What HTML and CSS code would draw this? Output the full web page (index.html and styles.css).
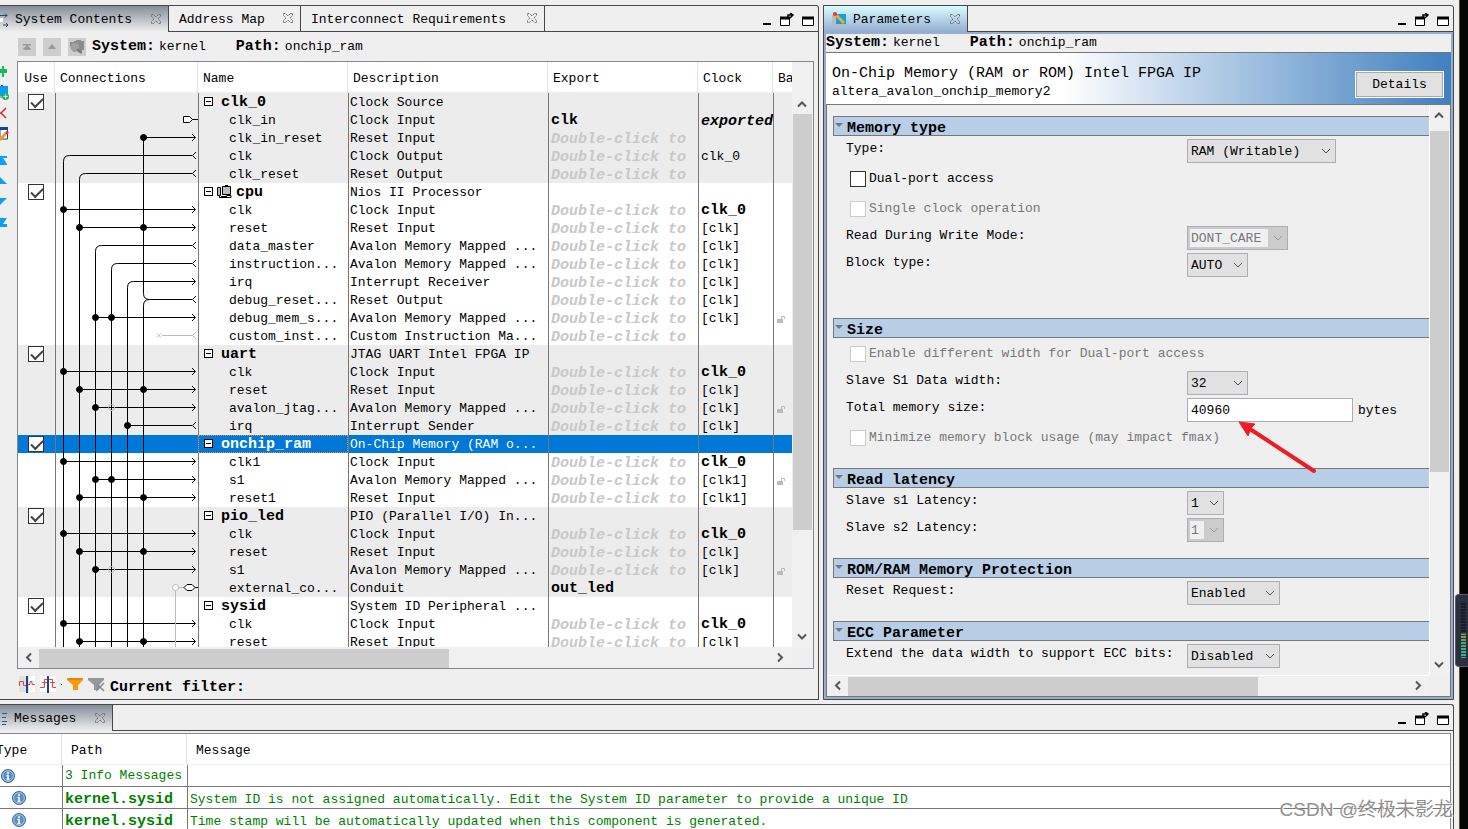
FILE: index.html
```html
<!DOCTYPE html>
<html lang="en">
<head>
<meta charset="utf-8">
<title>System Contents</title>
<link rel="stylesheet" href="styles.css">
</head>
<body>
<svg class="defs" aria-hidden="true">
  <defs>
    <symbol id="close" viewBox="0 0 12 12"><path d="M1.500 1.500h2l2.500 2.500 2.500-2.500h2v2L8 6l2.500 2.500v2h-2L6 8l-2.500 2.500h-2v-2L4 6 1.500 3.500z" fill="none" stroke="#6a6a6a" stroke-dasharray="1.500 0.700"/></symbol>
    <symbol id="win-min" viewBox="0 0 10 14"><path d="M1 11h8" stroke="#000" stroke-width="2"/></symbol>
    <symbol id="win-float" viewBox="0 0 15 14"><path d="M1.500 4.500h9v8h-9z" fill="#fff" stroke="#000"/><path d="M1 5h10" stroke="#000" stroke-width="3"/><path d="M9 4V2h4M11 0l3 2-3 3" fill="none" stroke="#000" stroke-width="1.500"/></symbol>
    <symbol id="win-max" viewBox="0 0 13 14"><path d="M1.500 4.500h11v8h-11z" fill="#fff" stroke="#000"/><path d="M1 5h12" stroke="#000" stroke-width="3"/></symbol>
    <symbol id="up" viewBox="0 0 20 20"><path d="M6 12.500l4-4 4 4" fill="none" stroke="#555" stroke-width="2"/></symbol>
    <symbol id="down" viewBox="0 0 20 20"><path d="M6 7.500l4 4 4-4" fill="none" stroke="#555" stroke-width="2"/></symbol>
    <symbol id="left" viewBox="0 0 20 20"><path d="M12 5.500l-4 4 4 4" fill="none" stroke="#555" stroke-width="2"/></symbol>
    <symbol id="right" viewBox="0 0 20 20"><path d="M7 5.500l4 4-4 4" fill="none" stroke="#555" stroke-width="2"/></symbol>
    <symbol id="lock" viewBox="0 0 9 9"><path d="M0 4h6v4H0z" fill="#bbb"/><path d="M4.500 4V1.500h3V4" fill="none" stroke="#bbb"/></symbol>
    <symbol id="info" viewBox="0 0 14 14"><circle cx="7" cy="7" r="6.500" fill="#5b8fc7" stroke="#3e6a9c"/><circle cx="7" cy="7" r="5.300" fill="none" stroke="#a9c6e6"/><path d="M7 3v2M5.500 6.500H7V10M5.500 10.500h3" stroke="#fff" stroke-width="1.500" fill="none"/></symbol>
  </defs>
</svg>

<div class="app">
  <div class="workspace">
    <div class="upper">
      <section class="panel contents">
        <div class="tabs">
          <button class="tab tab-cut active"><svg width="10" height="14" viewBox="0 0 10 14"><path d="M0 5h3v4H0z" fill="#fff"/><path d="M0 2.500h7M5 0.500l2 2-2 2M3 12h5M6 10l2 2-2 2" fill="none" stroke="#24466f"/></svg><span class="tab-name">System Contents</span><svg class="x" width="12" height="12"><use href="#close"/></svg></button>
          <button class="tab w-map"><span class="tab-name">Address Map</span><svg class="x" width="12" height="12"><use href="#close"/></svg></button>
          <button class="tab w-req"><span class="tab-name">Interconnect Requirements</span><svg class="x" width="12" height="12"><use href="#close"/></svg></button>
          <div class="tab-rest"><svg width="10" height="14"><use href="#win-min"/></svg><svg width="15" height="14"><use href="#win-float"/></svg><svg width="13" height="14"><use href="#win-max"/></svg></div>
        </div>
        <div class="contents-grid">
          <div class="pathbar">
            <button class="sq" aria-label="Top"><svg width="18" height="18"><path d="M5 6h8v1.500H5zM9 7l4 4h-2v1H7v-1H5z" fill="#999"/><path d="M5 11h8" stroke="#999"/></svg></button>
            <button class="sq" aria-label="Up"><svg width="18" height="18"><path d="M9 6l4 5H5z" fill="#999"/></svg></button>
            <button class="sq" aria-label="Into"><svg width="18" height="18"><path d="M2 4h4V3h2V2h5v1h3v9h-2v4l-4-3-4 1-3-3-1-4z" fill="#8c8c8c"/><circle cx="7" cy="9" r="4" fill="#a0a0a0"/><path d="M9 11l4 4" stroke="#777" stroke-width="2"/></svg></button>
            <b>System:</b><span class="val">kernel</span><b class="second">Path:</b><span class="val">onchip_ram</span>
          </div>
          <aside class="tools">
            <button aria-label="Add"><svg width="10" height="21"><path d="M0 8h2V5h2v3h3v4H4v4H2v-4H0z" fill="#11c05a"/></svg></button>
            <button aria-label="Add block"><svg width="10" height="21"><path d="M1 3h2v2H1z" fill="#0c47a1"/><path d="M0 4h8v10H0z" fill="#0a9bf2"/><path d="M0 14h7v2H0z" fill="#aaa"/><circle cx="5.500" cy="14.500" r="3.500" fill="#16bb5d"/><path d="M3.500 14.500h4M5.500 12.500v4" stroke="#fff"/></svg></button>
            <button aria-label="Remove"><svg width="10" height="21"><path d="M6 5L1 10l5 5M1 10H0" fill="none" stroke="#e5202a" stroke-width="1.500"/></svg></button>
            <button aria-label="Edit"><svg width="10" height="21"><path d="M0 4h7.500v11H0z" fill="#fff" stroke="#0c47a1"/><path d="M0 3h8v3H0z" fill="#0c47a1"/><path d="M0 16l6-7" stroke="#f79a1c" stroke-width="3"/><circle cx="7" cy="8.500" r="1.500" fill="#ed2d24"/></svg></button>
            <button class="gap" aria-label="Move to top"><svg width="10" height="21"><path d="M0 6h7v2H3l4 6v1H0z" fill="#0aa0f5"/></svg></button>
            <button aria-label="Move up"><svg width="10" height="21"><path d="M0 6l7 7H0z" fill="#0aa0f5"/></svg></button>
            <button aria-label="Move down"><svg width="10" height="21"><path d="M0 6h7l-7 7z" fill="#0aa0f5"/></svg></button>
            <button aria-label="Move to bottom"><svg width="10" height="21"><path d="M0 5h7l-4 6h4v3H0z" fill="#0aa0f5"/></svg></button>
          </aside>
          <div class="frame">
            <div class="view">
              <table class="sys">
                <colgroup><col class="c-use"><col class="c-conn"><col class="c-name"><col><col class="c-exp"><col class="c-clk"><col class="c-base"></colgroup>
                <thead><tr><th>Use</th><th>Connections</th><th>Name</th><th>Description</th><th>Export</th><th>Clock</th><th>Ba</th></tr></thead>
                <tbody class="alt">
                  <tr><td><input type="checkbox" checked aria-label="Use clk_0"></td><td></td><td class="top"><button class="fold" aria-label="Collapse"></button>clk_0</td><td>Clock Source</td><td></td><td></td><td></td></tr>
                  <tr><td></td><td></td><td class="sub">clk_in</td><td>Clock Input</td><td class="strong">clk</td><td class="strong ital">exported</td><td></td></tr>
                  <tr><td></td><td></td><td class="sub">clk_in_reset</td><td>Reset Input</td><td class="hint">Double-click to</td><td></td><td></td></tr>
                  <tr><td></td><td></td><td class="sub">clk</td><td>Clock Output</td><td class="hint">Double-click to</td><td>clk_0</td><td></td></tr>
                  <tr><td></td><td></td><td class="sub">clk_reset</td><td>Reset Output</td><td class="hint">Double-click to</td><td></td><td></td></tr>
                </tbody>
                <tbody>
                  <tr><td><input type="checkbox" checked aria-label="Use cpu"></td><td></td><td class="top"><button class="fold" aria-label="Collapse"></button><svg class="chip" width="15" height="14" viewBox="0 0 15 14"><path d="M5.500 1.500h8v8h-8zM0.500 2.500h3v8h-3z" fill="#bbb" stroke="#000"/><path d="M4 11.500h6M2.500 11v2M2 12.500h12v-2H9.500" stroke="#000" fill="none"/><path d="M8 0.500h3" stroke="#000"/></svg>cpu</td><td>Nios II Processor</td><td></td><td></td><td></td></tr>
                  <tr><td></td><td></td><td class="sub">clk</td><td>Clock Input</td><td class="hint">Double-click to</td><td class="strong">clk_0</td><td></td></tr>
                  <tr><td></td><td></td><td class="sub">reset</td><td>Reset Input</td><td class="hint">Double-click to</td><td>[clk]</td><td></td></tr>
                  <tr><td></td><td></td><td class="sub">data_master</td><td>Avalon Memory Mapped ...</td><td class="hint">Double-click to</td><td>[clk]</td><td></td></tr>
                  <tr><td></td><td></td><td class="sub">instruction...</td><td>Avalon Memory Mapped ...</td><td class="hint">Double-click to</td><td>[clk]</td><td></td></tr>
                  <tr><td></td><td></td><td class="sub">irq</td><td>Interrupt Receiver</td><td class="hint">Double-click to</td><td>[clk]</td><td></td></tr>
                  <tr><td></td><td></td><td class="sub">debug_reset...</td><td>Reset Output</td><td class="hint">Double-click to</td><td>[clk]</td><td></td></tr>
                  <tr><td></td><td></td><td class="sub">debug_mem_s...</td><td>Avalon Memory Mapped ...</td><td class="hint">Double-click to</td><td>[clk]</td><td><svg class="lock" width="9" height="9"><use href="#lock"/></svg></td></tr>
                  <tr><td></td><td></td><td class="sub">custom_inst...</td><td>Custom Instruction Ma...</td><td class="hint">Double-click to</td><td></td><td></td></tr>
                </tbody>
                <tbody class="alt">
                  <tr><td><input type="checkbox" checked aria-label="Use uart"></td><td></td><td class="top"><button class="fold" aria-label="Collapse"></button>uart</td><td>JTAG UART Intel FPGA IP</td><td></td><td></td><td></td></tr>
                  <tr><td></td><td></td><td class="sub">clk</td><td>Clock Input</td><td class="hint">Double-click to</td><td class="strong">clk_0</td><td></td></tr>
                  <tr><td></td><td></td><td class="sub">reset</td><td>Reset Input</td><td class="hint">Double-click to</td><td>[clk]</td><td></td></tr>
                  <tr><td></td><td></td><td class="sub">avalon_jtag...</td><td>Avalon Memory Mapped ...</td><td class="hint">Double-click to</td><td>[clk]</td><td><svg class="lock" width="9" height="9"><use href="#lock"/></svg></td></tr>
                  <tr><td></td><td></td><td class="sub">irq</td><td>Interrupt Sender</td><td class="hint">Double-click to</td><td>[clk]</td><td></td></tr>
                </tbody>
                <tbody>
                  <tr class="selected"><td><input type="checkbox" checked aria-label="Use onchip_ram"></td><td></td><td class="top"><button class="fold" aria-label="Collapse"></button>onchip_ram</td><td>On-Chip Memory (RAM o...</td><td></td><td></td><td></td></tr>
                  <tr><td></td><td></td><td class="sub">clk1</td><td>Clock Input</td><td class="hint">Double-click to</td><td class="strong">clk_0</td><td></td></tr>
                  <tr><td></td><td></td><td class="sub">s1</td><td>Avalon Memory Mapped ...</td><td class="hint">Double-click to</td><td>[clk1]</td><td><svg class="lock" width="9" height="9"><use href="#lock"/></svg></td></tr>
                  <tr><td></td><td></td><td class="sub">reset1</td><td>Reset Input</td><td class="hint">Double-click to</td><td>[clk1]</td><td></td></tr>
                </tbody>
                <tbody class="alt">
                  <tr><td><input type="checkbox" checked aria-label="Use pio_led"></td><td></td><td class="top"><button class="fold" aria-label="Collapse"></button>pio_led</td><td>PIO (Parallel I/O) In...</td><td></td><td></td><td></td></tr>
                  <tr><td></td><td></td><td class="sub">clk</td><td>Clock Input</td><td class="hint">Double-click to</td><td class="strong">clk_0</td><td></td></tr>
                  <tr><td></td><td></td><td class="sub">reset</td><td>Reset Input</td><td class="hint">Double-click to</td><td>[clk]</td><td></td></tr>
                  <tr><td></td><td></td><td class="sub">s1</td><td>Avalon Memory Mapped ...</td><td class="hint">Double-click to</td><td>[clk]</td><td><svg class="lock" width="9" height="9"><use href="#lock"/></svg></td></tr>
                  <tr><td></td><td></td><td class="sub">external_co...</td><td>Conduit</td><td class="strong">out_led</td><td></td><td></td></tr>
                </tbody>
                <tbody>
                  <tr><td><input type="checkbox" checked aria-label="Use sysid"></td><td></td><td class="top"><button class="fold" aria-label="Collapse"></button>sysid</td><td>System ID Peripheral ...</td><td></td><td></td><td></td></tr>
                  <tr><td></td><td></td><td class="sub">clk</td><td>Clock Input</td><td class="hint">Double-click to</td><td class="strong">clk_0</td><td></td></tr>
                  <tr><td></td><td></td><td class="sub">reset</td><td>Reset Input</td><td class="hint">Double-click to</td><td>[clk]</td><td></td></tr>
                </tbody>
              </table>
              <svg class="wires" width="143" height="558" viewBox="55 93 143 558" fill="none" stroke="#000">
                <defs>
                  <marker id="m-in" markerUnits="userSpaceOnUse" markerWidth="6" markerHeight="10" refX="4" refY="5"><path d="M1 1.500L4.500 5 1 8.500" fill="none" stroke="#000"/></marker>
                  <marker id="m-out" markerUnits="userSpaceOnUse" markerWidth="6" markerHeight="10" refX="1" refY="5"><path d="M5 1.500L1.500 5 5 8.500" fill="none" stroke="#000"/></marker>
                </defs>
                <path d="M183.500 116.500h6l3 3-3 3h-6z" fill="#fff"/><path d="M192.500 119.500H198"/>
                <g marker-end="url(#m-in)">
                  <path d="M143.500 137.500H195"/><path d="M63.500 209.500H195"/><path d="M79.500 227.500H195"/>
                  <path d="M127.500 648V287.500q0-6 6-6H195"/><path d="M95.500 317.500H195"/>
                  <path d="M63.500 371.500H195"/><path d="M79.500 389.500H195"/><path d="M95.500 407.500H195"/>
                  <path d="M63.500 461.500H195"/><path d="M95.500 479.500H195"/><path d="M79.500 497.500H195"/>
                  <path d="M63.500 533.500H195"/><path d="M79.500 551.500H195"/><path d="M95.500 569.500H195"/>
                  <path d="M63.500 623.500H195"/><path d="M79.500 641.500H195"/>
                </g>
                <g marker-end="url(#m-out)">
                  <path d="M63.500 648V161.500q0-6 6-6H192"/><path d="M79.500 648V179.500q0-6 6-6H192"/>
                  <path d="M95.500 648V251.500q0-6 6-6H192"/><path d="M111.500 648V269.500q0-6 6-6H192"/>
                  <path d="M143.500 137.500V293.500q0 6 6 6H192"/><path d="M127.500 425.500H192"/>
                </g>
                <path d="M149.500 299.500q-6 0-6 6V648"/>
                <g stroke="#bbb"><path d="M157 333.500l4 4M161 333.500l-4 4M162 335.500H192M196 332l-3.500 3.500 3.500 3.500M175.500 590V648M178 587.500h8"/><circle cx="175.500" cy="587.500" r="3" fill="#fff"/><circle cx="111.500" cy="407.500" r="3"/><circle cx="111.500" cy="569.500" r="3"/></g>
                <path d="M187 584.500h5l3 3-3 3h-5l-3-3z" fill="#fff"/><path d="M195 587.500h4"/>
                <g fill="#000">
                  <circle cx="143.500" cy="137.500" r="3"/><circle cx="63.500" cy="209.500" r="3"/><circle cx="79.500" cy="227.500" r="3"/><circle cx="143.500" cy="227.500" r="3"/>
                  <circle cx="95.500" cy="317.500" r="3"/><circle cx="111.500" cy="317.500" r="3"/><circle cx="63.500" cy="371.500" r="3"/><circle cx="79.500" cy="389.500" r="3"/><circle cx="143.500" cy="389.500" r="3"/>
                  <circle cx="95.500" cy="407.500" r="3"/><circle cx="127.500" cy="425.500" r="3"/><circle cx="63.500" cy="461.500" r="3"/><circle cx="95.500" cy="479.500" r="3"/><circle cx="111.500" cy="479.500" r="3"/>
                  <circle cx="79.500" cy="497.500" r="3"/><circle cx="143.500" cy="497.500" r="3"/><circle cx="63.500" cy="533.500" r="3"/><circle cx="79.500" cy="551.500" r="3"/><circle cx="143.500" cy="551.500" r="3"/>
                  <circle cx="95.500" cy="569.500" r="3"/><circle cx="63.500" cy="623.500" r="3"/><circle cx="79.500" cy="641.500" r="3"/><circle cx="143.500" cy="641.500" r="3"/>
                </g>
              </svg>
            </div>
            <div class="vbar sys-vbar"><svg width="20" height="20"><use href="#up"/></svg><div class="track"><div class="thumb"></div></div><svg width="20" height="20"><use href="#down"/></svg></div>
            <div class="hbar sys-hbar"><svg width="20" height="20"><use href="#left"/></svg><div class="track"><div class="thumb"></div></div><svg width="20" height="20"><use href="#right"/></svg></div>
          </div>
          <div class="filterbar">
            <svg width="16" height="17"><path d="M0 0h16v16H0z" fill="#e0e0e0"/><path d="M10 0h6v16h-6z" fill="#fff"/><path d="M0.500 10V5.500h4v4h3M9 8.500h2v-3h2v3h3" fill="none" stroke="#ee4035"/><path d="M8 0v17" stroke="#0c47a1" stroke-width="2"/></svg>
            <svg width="16" height="17"><path d="M0 0h16v16H0z" fill="#fff"/><path d="M0 11.500h4.500v-8h8v8H16M2 6.500h5M10 6.500h5" fill="none" stroke="#ee4035"/><path d="M8 0v17" stroke="#0c47a1" stroke-width="2"/></svg>
            <i class="dot"></i>
            <svg width="16" height="14"><path d="M0 1h16v2l-5 5v5H6V8L0 3z" fill="#ff9800"/><path d="M1 2h14" stroke="#b57a2b"/></svg>
            <svg width="17" height="15"><path d="M0 1h16v2l-5 5v5H6V8L0 3z" fill="#999"/><path d="M8 14l8-8M9 7l7 7" stroke="#888" stroke-width="1.500"/></svg>
            <b>Current filter:</b>
          </div>
        </div>
      </section>

      <section class="panel params">
        <div class="tabs">
          <button class="tab tab-param active"><svg width="16" height="16"><path d="M0 3h4v9H0zM2 12h12v3H2z" fill="#bbb"/><path d="M4 2h10v10H4z" fill="#0da2ee"/><path d="M4 3l8 8" stroke="#f9a825" stroke-width="3"/><circle cx="3" cy="2" r="2" fill="#e33"/></svg><span class="tab-name">Parameters</span><svg class="x" width="12" height="12"><use href="#close"/></svg></button>
          <div class="tab-rest"><svg width="10" height="14"><use href="#win-min"/></svg><svg width="15" height="14"><use href="#win-float"/></svg><svg width="13" height="14"><use href="#win-max"/></svg></div>
        </div>
        <div class="blue">
          <div class="crumbs"><b>System:</b><span class="val">kernel</span><b class="second">Path:</b><span class="val">onchip_ram</span></div>
          <header class="banner">
            <div><h1>On-Chip Memory (RAM or ROM) Intel FPGA IP</h1><p>altera_avalon_onchip_memory2</p></div>
            <button class="details">Details</button>
          </header>
          <div class="pscroll">
            <form class="pview">
              <fieldset class="roomy">
                <legend>Memory type</legend>
                <div class="row"><label for="type">Type:</label><select id="type" class="w149"><option>RAM (Writable)</option></select></div>
                <label class="check"><input type="checkbox">Dual-port access</label>
                <label class="check off"><input type="checkbox" disabled>Single clock operation</label>
                <div class="row"><label for="rdw">Read During Write Mode:</label><select id="rdw" class="w101" disabled><option>DONT_CARE</option></select></div>
                <div class="row"><label for="block">Block type:</label><select id="block" class="w61"><option>AUTO</option></select></div>
              </fieldset>
              <fieldset>
                <legend>Size</legend>
                <label class="check off"><input type="checkbox" disabled>Enable different width for Dual-port access</label>
                <div class="row"><label for="width">Slave S1 Data width:</label><select id="width" class="w61"><option>32</option></select></div>
                <div class="row"><label for="total">Total memory size:</label><input id="total" type="text" value="40960"><span class="unit">bytes</span>
                  <svg class="arrow" width="80" height="56" viewBox="0 0 80 56"><path d="M12 9l64 42" stroke="#ee1c25" stroke-width="4" stroke-linecap="round"/><path d="M1 2l16 2-4 4-3 8z" fill="#ee1c25" stroke="#ee1c25"/></svg></div>
                <label class="check off"><input type="checkbox" disabled>Minimize memory block usage (may impact fmax)</label>
              </fieldset>
              <fieldset>
                <legend>Read latency</legend>
                <div class="row"><label for="lat1">Slave s1 Latency:</label><select id="lat1" class="w37"><option>1</option></select></div>
                <div class="row"><label for="lat2">Slave s2 Latency:</label><select id="lat2" class="w37" disabled><option>1</option></select></div>
              </fieldset>
              <fieldset>
                <legend>ROM/RAM Memory Protection</legend>
                <div class="row"><label for="rst">Reset Request:</label><select id="rst" class="w93"><option>Enabled</option></select></div>
              </fieldset>
              <fieldset>
                <legend>ECC Parameter</legend>
                <div class="row"><label for="ecc">Extend the data width to support ECC bits:</label><select id="ecc" class="w93"><option>Disabled</option></select></div>
              </fieldset>
            </form>
            <div class="vbar par-vbar"><svg width="20" height="20"><use href="#up"/></svg><div class="track"><div class="thumb"></div></div><svg width="20" height="20"><use href="#down"/></svg></div>
            <div class="hbar par-hbar"><svg width="20" height="20"><use href="#left"/></svg><div class="track"><div class="thumb"></div></div><svg width="20" height="20"><use href="#right"/></svg></div>
          </div>
        </div>
      </section>
    </div>

    <section class="panel messages">
      <div class="tabs">
        <button class="tab tab-cut active"><svg width="10" height="14" viewBox="0 0 10 14"><path d="M2 1.500h5M2 5.500h4M2 9.500h5M2 12.500h4" stroke="#2a5a9a"/></svg><span class="tab-name">Messages</span><svg class="x" width="12" height="12"><use href="#close"/></svg></button>
        <div class="tab-rest"><svg width="10" height="14"><use href="#win-min"/></svg><svg width="15" height="14"><use href="#win-float"/></svg><svg width="13" height="14"><use href="#win-max"/></svg></div>
      </div>
      <div class="msgframe">
        <table class="msgs">
          <colgroup><col class="m-type"><col class="m-path"><col></colgroup>
          <thead><tr><th>Type</th><th>Path</th><th>Message</th></tr></thead>
          <tbody>
            <tr><td><svg width="14" height="14"><use href="#info"/></svg></td><td>3 Info Messages</td><td></td></tr>
            <tr><td class="nest"><svg width="14" height="14"><use href="#info"/></svg></td><td class="strong">kernel.sysid</td><td>System ID is not assigned automatically. Edit the System ID parameter to provide a unique ID</td></tr>
            <tr><td class="nest"><svg width="14" height="14"><use href="#info"/></svg></td><td class="strong">kernel.sysid</td><td>Time stamp will be automatically updated when this component is generated.</td></tr>
          </tbody>
        </table>
      </div>
    </section>
  </div>
  <div class="edge"></div>
  <div class="meter"><i></i></div>
  <div class="mark">CSDN @终极末影龙</div>
</div>
</body>
</html>
```
FILE: styles.css
```css
* { box-sizing: border-box; }
body, button, input, select {
  font-family: "Liberation Mono", "Noto Sans CJK SC", monospace;
  font-size: 13px;
  line-height: 16px;
  color: #000;
}
body { margin: 0; background: #efefef; overflow: hidden; }
button { border: 0; padding: 0; background: none; }
svg { display: block; flex: none; }
b, .strong { font-size: 15px; font-weight: bold; }
h1, p { margin: 0; }
.defs { position: absolute; width: 0; height: 0; }

.app { position: relative; display: flex; height: 100vh; }
.workspace { flex: 1; min-width: 0; display: flex; flex-direction: column; gap: 4px; padding: 5px 5px 0 0; }
.upper { flex: 1; min-height: 0; display: grid; grid-template-columns: minmax(0, 819fr) minmax(0, 631fr); gap: 4px; }
.panel { display: flex; flex-direction: column; min-height: 0; border: 1px solid #484848; border-radius: 0 3px 0 0; }
.contents, .messages { border-left: 0; }

/* tab strips */
.tabs { display: flex; height: 26px; }
.tab { display: flex; align-items: center; border-right: 1px solid #484848; border-bottom: 1px solid #484848; padding: 2px 6px 0 10px; white-space: nowrap; }
.tab-name { flex: 1; text-align: left; }
.tab .x { margin-bottom: 3px; }
.tab.active { border-bottom: 0; background: linear-gradient(#848e99, #efefef); }
.tab-cut { padding: 2px 6px 0 0; gap: 5px; width: 169px; }
.messages .tab-cut { width: 113px; gap: 4px; }
.w-map { width: 132px; }
.w-req { width: 244px; }
.params .tab.active { width: 144px; padding: 2px 6px 0 8px; gap: 5px; background: linear-gradient(#dafcff, #94add0); }
.tab-rest { flex: 1; display: flex; justify-content: flex-end; align-items: center; gap: 7px; padding: 3px 4px 0 0; border-bottom: 1px solid #484848; }

/* system contents */
.contents-grid { flex: 1; min-height: 0; display: grid; grid-template-columns: 17px minmax(0, 1fr); grid-template-rows: 29px minmax(0, 1fr) 30px; padding-right: 4px; }
.pathbar { grid-column: 1 / 3; display: flex; align-items: center; padding-left: 18px; }
.sq { width: 18px; height: 18px; margin-right: 7px; background: #cdcdcd; }
.pathbar b { margin-left: -1px; }
.val { margin-left: 4px; }
.pathbar .second, .crumbs .second { margin-left: 30px; }
.tools { display: flex; flex-direction: column; }
.tools button { height: 21px; }
.tools .gap { margin-top: 5px; }
.frame { border: 1px solid #828790; display: grid; grid-template-columns: minmax(0, 1fr) 21px; grid-template-rows: minmax(0, 1fr) 21px; }
.view { position: relative; overflow: hidden; background: #fff; }
.sys { width: 100%; table-layout: fixed; border-collapse: separate; border-spacing: 0; }
.c-use { width: 37px; } .c-conn { width: 143px; } .c-name { width: 150px; }
.c-exp { width: 150px; } .c-clk { width: 75px; } .c-base { width: 19px; }
th { font-weight: normal; text-align: left; white-space: nowrap; overflow: hidden; }
.sys th { height: 31px; padding: 4px 0 0 5px; border-right: 1px solid #e4e4e4; border-bottom: 1px solid #efefef; }
.sys th:first-child { text-align: center; padding-left: 0; }
.sys th:last-child { border-right: 0; }
.sys td { height: 18px; padding: 2px 0 0 1px; line-height: 16px; border-left: 1px solid #777; white-space: nowrap; overflow: hidden; }
.sys td:first-child { border-left: 0; padding: 0 0 0 10px; }
.sys td.sub { padding-left: 30px; }
.sys td.top { padding-left: 5px; font-size: 15px; font-weight: bold; }
.sys td:nth-child(5), .sys td:nth-child(6) { padding-left: 2px; }
.sys td.hint, .sys td.ital { padding-top: 4px; line-height: 14px; font-style: italic; }
.sys td.hint { color: #c8c8c8; font-size: 15px; font-weight: bold; }
.alt { background: #ececec; }
.selected { background: #0078d7; color: #fff; }
.sys .selected .top { outline: 1px dotted #e58a3a; outline-offset: -1px; }
.fold { display: inline-block; width: 9px; height: 9px; margin-right: 8px; vertical-align: 1px; border: 1px solid #000; background: linear-gradient(#000, #000) center / 5px 1px no-repeat #fff; }
.chip { display: inline-block; margin: -3px 4px -3px -4px; vertical-align: 0; }
.lock { margin-left: 2px; }
.wires { position: absolute; left: 37px; top: 31px; }
input[type=checkbox] { appearance: none; display: block; flex: none; width: 16px; height: 16px; margin: 0; border: 1px solid #333; background: #fff; }
input[type=checkbox]:checked::after { content: ""; display: block; width: 10px; height: 5px; margin: 3px 0 0 2px; border: solid #444; border-width: 0 0 2px 2px; transform: rotate(-45deg); }
input[type=checkbox]:disabled { border-color: #ccc; }

/* scroll bars */
.vbar { display: flex; flex-direction: column; align-items: flex-end; background: #f0f0f0; }
.hbar { display: flex; align-items: flex-end; background: #f0f0f0; }
.track { flex: 1; min-width: 0; min-height: 0; }
.vbar .track { width: 19px; }
.hbar .track { height: 19px; }
.thumb { width: 100%; height: 100%; background: #cdcdcd; }
.sys-vbar { padding-top: 32px; padding-right: 1px; }
.sys-vbar .thumb { height: 81%; }
.sys-hbar { margin-right: 1px; padding-left: 1px; }
.sys-hbar .thumb { width: 56%; }
.par-vbar { border-left: 1px solid #fff; padding-right: 1px; }
.par-vbar .track { padding-top: 6px; }
.par-vbar .thumb { height: 65%; }
.par-hbar { border-top: 1px solid #fff; padding-left: 1px; }
.par-hbar .thumb { width: 73%; }

.filterbar { grid-column: 1 / 3; display: flex; align-items: center; gap: 5px; padding: 0 0 0 19px; }
.filterbar b { margin: 7px 0 0 0; }
.dot { width: 1px; height: 1px; background: #666; }

/* parameters */
.blue { flex: 1; min-height: 0; display: flex; flex-direction: column; border: 2px solid #94add0; }
.crumbs { height: 19px; display: flex; align-items: center; border-bottom: 1px solid #777; background: #efefef; }
.banner { height: 52px; display: flex; justify-content: space-between; padding: 12px 7px 0 6px; border-bottom: 1px solid #777; background: linear-gradient(90deg, #fff 38%, #b9d0e8 60%, #3f80bf); }
.banner h1 { font-size: 15px; line-height: 18px; font-weight: normal; }
.banner p { line-height: 18px; }
.details { width: 89px; height: 27px; margin-top: 6px; border: 1px solid #fff; outline: 1px solid #a8a8b0; outline-offset: -2px; background: #e1e1e1; }
.pscroll { flex: 1; min-height: 0; display: grid; grid-template-columns: minmax(0, 1fr) 21px; grid-template-rows: minmax(0, 1fr) 21px; border: solid #777; border-width: 0 1px 1px 1px; }
.pview { overflow: hidden; padding: 11px 0 0 6px; }
fieldset { margin: 0 0 16px; padding: 0; border: 0; min-width: 0; }
fieldset.roomy { margin-bottom: 41px; }
legend { position: relative; width: 100%; height: 20px; padding: 4px 0 0 13px; line-height: 15px; font-size: 15px; font-weight: bold; border: solid #777; border-width: 1px 0 1px 1px; background: #b8cee6; }
legend::before { content: ""; position: absolute; left: 1px; top: 6px; border: 4px solid transparent; border-top-color: #777; }
.row { position: relative; display: grid; grid-template-columns: 341px max-content auto; justify-content: start; padding: 3px 0 0 13px; }
.row label { padding-top: 2px; }
.unit { padding: 5px 0 0 5px; }
.check { display: flex; align-items: center; gap: 3px; height: 30px; padding: 2px 0 0 17px; }
.check.off { color: #777; }
select {
  appearance: none; height: 24px; padding: 1px 0 0 3px; border: 1px solid #acacb2; border-radius: 0;
  background: url("data:image/svg+xml,%3Csvg xmlns='http://www.w3.org/2000/svg' width='11' height='7'%3E%3Cpath d='M1 1l4 4 4-4' fill='none' stroke='%23555'/%3E%3C/svg%3E") right 3px center no-repeat #e1e1e1;
}
select:disabled {
  color: #777; opacity: 1;
  background: url("data:image/svg+xml,%3Csvg xmlns='http://www.w3.org/2000/svg' width='11' height='7'%3E%3Cpath d='M1 1l4 4 4-4' fill='none' stroke='%23999'/%3E%3C/svg%3E") right 3px center no-repeat,
    linear-gradient(#f0f0f0, #f0f0f0) 2px 2px / calc(100% - 21px) 18px no-repeat #ccc;
}
.w37 { width: 37px; } .w61 { width: 61px; } .w93 { width: 93px; } .w101 { width: 101px; } .w149 { width: 149px; }
input[type=text] { width: 166px; height: 24px; padding: 0 3px; border: 1px solid #acacb2; }
.arrow { position: absolute; left: 405px; top: 25px; z-index: 1; }

/* messages */
.messages { height: 125px; border-bottom: 0; flex: none; }
.msgframe { flex: 1; margin: 2px 2px 0 0; border: solid #828790; border-width: 1px 1px 0 0; background: #fff; overflow: hidden; }
.msgs { width: 100%; table-layout: fixed; border-collapse: separate; border-spacing: 0; color: #008000; }
.m-type { width: 62px; } .m-path { width: 125px; }
.msgs th { height: 31px; padding: 4px 0 0 9px; color: #000; border-right: 1px solid #e4e4e4; border-bottom: 1px solid #efefef; }
.msgs th:first-child { padding-left: 0; text-indent: -4px; }
.msgs th:last-child { border-right: 0; }
.msgs td { height: 22px; padding: 0 0 0 2px; border-left: 1px solid #777; border-bottom: 1px solid #777; white-space: nowrap; }
.msgs td:first-child { border-left: 0; padding-left: 1px; }
.msgs td.nest { padding-left: 12px; }
.msgs tr:nth-child(n+2) td:not(.nest) { padding-top: 4px; }

/* desktop strip */
.edge { width: 9px; background: #050505; border-left: 1px solid #6b4a22; }
.meter { position: absolute; right: 0; top: 594px; width: 13px; height: 73px; padding: 8px 2px 8px 5px; border: 1px solid #555b70; border-right: 0; border-radius: 4px 0 0 4px; background: #2b2f3e; }
.meter i { display: block; height: 100%; background: repeating-linear-gradient(transparent 0 2px, #2b2f3e 2px 3px), linear-gradient(#181c28 55%, #8aa050 56%, #3fae6a 75%, #35b89a); }
.mark { position: absolute; right: 15px; top: 797px; font: 19px/26px "Liberation Sans", "Noto Sans CJK SC", sans-serif; color: #909090; text-shadow: 1px 1px 0 #fff; white-space: nowrap; }
```
